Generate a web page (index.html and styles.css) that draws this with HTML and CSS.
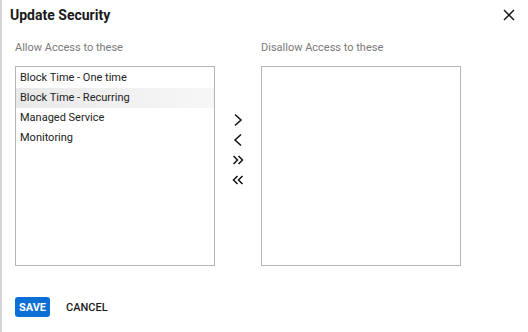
FILE: index.html
```html
<!DOCTYPE html>
<html lang="en">

<head>
    <meta charset="UTF-8" />
    <meta name="viewport" content="width=device-width, initial-scale=1.0" />
    <title>Update Security</title>
    <link rel="stylesheet" href="styles.css">
</head>

<body>
    <div class="dialog">
        <div class="dialog-head">
            <h2 class="title">Update Security</h2>
            <button class="close" aria-label="Close">
                <svg width="12" height="12" viewBox="0 0 12 12">
                    <path d="M1 1 L11 11 M11 1 L1 11" stroke="#111" stroke-width="1.4" fill="none" />
                </svg>
            </button>
        </div>

        <div class="picker">
            <div class="side">
                <div class="label">Allow Access to these</div>
                <ul class="list">
                    <li>Block Time - One time</li>
                    <li class="active">Block Time - Recurring</li>
                    <li>Managed Service</li>
                    <li>Monitoring</li>
                </ul>
            </div>

            <div class="moves">
                <button class="move" title="Move right">
                    <svg width="12" height="14" viewBox="0 0 12 14"><polyline points="3,1.5 9,7 3,12.5" /></svg>
                </button>
                <button class="move" title="Move left">
                    <svg width="12" height="14" viewBox="0 0 12 14"><polyline points="9,1.5 3,7 9,12.5" /></svg>
                </button>
                <button class="move" title="Move all right">
                    <svg width="12" height="14" viewBox="0 0 12 14"><polyline points="1.5,3 5.5,7 1.5,11" /><polyline points="6.5,3 10.5,7 6.5,11" /></svg>
                </button>
                <button class="move" title="Move all left">
                    <svg width="12" height="14" viewBox="0 0 12 14"><polyline points="5.5,3 1.5,7 5.5,11" /><polyline points="10.5,3 6.5,7 10.5,11" /></svg>
                </button>
            </div>

            <div class="side">
                <div class="label">Disallow Access to these</div>
                <ul class="list"></ul>
            </div>
        </div>

        <div class="actions">
            <button class="save">SAVE</button>
            <button class="cancel">CANCEL</button>
        </div>
    </div>
</body>

</html>
```

FILE: styles.css
```css
* {
    box-sizing: border-box;
}

body {
    margin: 0;
    background: #fff;
    font-family: Roboto, "Liberation Sans", sans-serif;
    color: #222;
}

.dialog {
    width: 528px;
    height: 332px;
    border-left: 2px solid #d4d4d4;
}

.dialog-head {
    display: flex;
    justify-content: space-between;
    align-items: center;
    padding: 5px 12px 0 8px;
}

.title {
    margin: 0;
    font-size: 14px;
    font-weight: 700;
    line-height: 20px;
    color: #1a1a1a;
}

.close {
    border: none;
    background: none;
    padding: 0;
    width: 14px;
    height: 14px;
    display: flex;
    align-items: center;
    justify-content: center;
}

.picker {
    display: flex;
    padding: 16px 0 0 13px;
}

.label {
    font-size: 11px;
    line-height: 14px;
    color: #7a7a7a;
    margin-bottom: 11px;
}

.list {
    list-style: none;
    margin: 0;
    padding: 1px 0 0;
    width: 200px;
    height: 200px;
    border: 1px solid #b5b5b5;
}

.list li {
    height: 20px;
    line-height: 20px;
    padding-left: 4px;
    font-size: 11px;
    color: #222;
}

.list li.active {
    background: linear-gradient(to right, #e9e9e9, #f7f7f7);
}

.moves {
    width: 46px;
    display: flex;
    flex-direction: column;
    align-items: center;
    padding-top: 69px;
}

.move {
    border: none;
    background: none;
    padding: 0;
    width: 14px;
    height: 20px;
    display: flex;
    align-items: center;
    justify-content: center;
}

.move polyline {
    fill: none;
    stroke: #111;
    stroke-width: 1.5;
}

.actions {
    display: flex;
    align-items: center;
    gap: 16px;
    padding: 31px 0 0 13px;
}

.save {
    background: #0b6fd6;
    color: #fff;
    border: none;
    border-radius: 3px;
    height: 20px;
    width: 35px;
    padding: 0;
    font-family: Roboto, "Liberation Sans", sans-serif;
    font-size: 11px;
    font-weight: 700;
}

.cancel {
    background: none;
    border: none;
    padding: 0;
    color: #1a1a1a;
    font-family: Roboto, "Liberation Sans", sans-serif;
    font-size: 11px;
    font-weight: 500;
}
```
